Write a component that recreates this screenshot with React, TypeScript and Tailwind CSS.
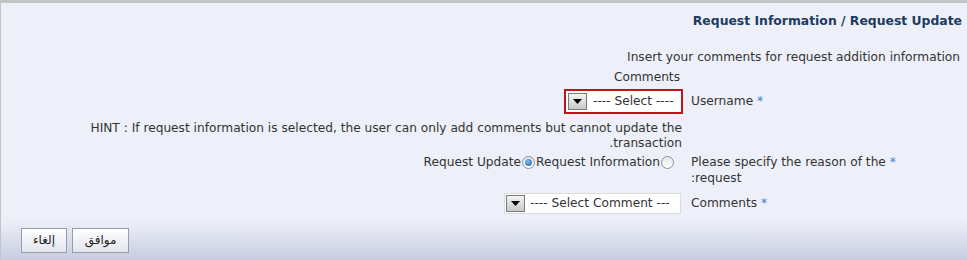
import React from "react";

function DropBtn() {
  return (
    <span className="flex items-center justify-center w-[19px] h-[17px] border border-[#7a7a7a] bg-gradient-to-b from-[#f4f4f4] to-[#c9c9c9]">
      <svg width="9" height="5" viewBox="0 0 9 5"><path d="M0 0h9L4.5 5z" fill="#000" /></svg>
    </span>
  );
}

function Radio({ checked }: { checked?: boolean }) {
  return (
    <span className="inline-flex items-center justify-center w-[13px] h-[13px] rounded-full border border-[#8a8f99] bg-gradient-to-b from-[#e4e6ea] to-[#ffffff]">
      {checked && <span className="w-[7px] h-[7px] rounded-full bg-[radial-gradient(circle_at_40%_35%,#7fc1f0,#1a5fa8)]" />}
    </span>
  );
}

export default function App() {
  return (
    <div className="relative w-[967px] h-[260px] overflow-hidden border-t-[3px] border-l border-[#c4c4c4] bg-[#eef0f9] font-['DejaVu_Sans',sans-serif] text-[12.2px] leading-[15px] text-[#333333]">
      <div className="absolute inset-x-0 bottom-0 h-[40px] bg-gradient-to-b from-transparent to-[#c6cce0] pointer-events-none" />
      <div className="relative flex flex-col">
        <div className="flex justify-end pr-[5px] pt-[10px] font-bold text-[12.4px] text-[#1d3b5e] leading-[15px]">
          Request Information / Request Update
        </div>
        <div className="flex justify-end pr-[7px] mt-[22px]">
          Insert your comments for request addition information
        </div>
        <div className="flex mt-[5px]">
          <div className="w-[681px] flex justify-end pr-[2px]">Comments</div>
        </div>
        <div className="flex items-center mt-[4px]">
          <div className="w-[682px] flex justify-end">
            <div className="flex items-center h-[25px] w-[119px] border-2 border-[#c8101a] bg-white pl-[2px] gap-[6px] whitespace-nowrap overflow-hidden">
              <DropBtn />
              <span>---- Select ----</span>
            </div>
          </div>
          <div className="pl-[8px]">
            Username <span className="text-[#3f7fce]">*</span>
          </div>
        </div>
        <div className="flex mt-[7px]">
          <div className="w-[681px] text-right whitespace-nowrap">
            HINT : If request information is selected, the user can only add comments but cannot update the
            <br />
            .transaction
          </div>
        </div>
        <div className="flex mt-[4px]">
          <div className="w-[682px] flex justify-end items-center h-[15px] gap-[1px] pr-[9px] whitespace-nowrap">
            <span>Request Update</span>
            <Radio checked />
            <span>Request Information</span>
            <Radio />
          </div>
          <div className="pl-[8px] leading-[16px] -mt-[1px]">
            Please specify the reason of the <span className="text-[#3f7fce]">*</span>
            <br />
            :request
          </div>
        </div>
        <div className="flex items-center mt-[7px]">
          <div className="w-[682px] flex justify-end pr-[2px]">
            <div className="flex items-center h-[21px] w-[177px] border border-[#dcdcdc] bg-white pl-[1px] gap-[5px] whitespace-nowrap overflow-hidden">
              <DropBtn />
              <span>---- Select Comment ---</span>
            </div>
          </div>
          <div className="pl-[8px]">
            Comments <span className="text-[#3f7fce]">*</span>
          </div>
        </div>
        <div className="flex gap-[5px] pl-[20px] mt-[14px] text-[12px]">
          <button className="h-[25px] w-[46px] border border-[#9a9ca6] bg-gradient-to-b from-white to-[#e3e5ee] text-[#222]">إلغاء</button>
          <button className="h-[25px] w-[57px] border border-[#9a9ca6] bg-gradient-to-b from-white to-[#e3e5ee] text-[#222]">موافق</button>
        </div>
      </div>
    </div>
  );
}
